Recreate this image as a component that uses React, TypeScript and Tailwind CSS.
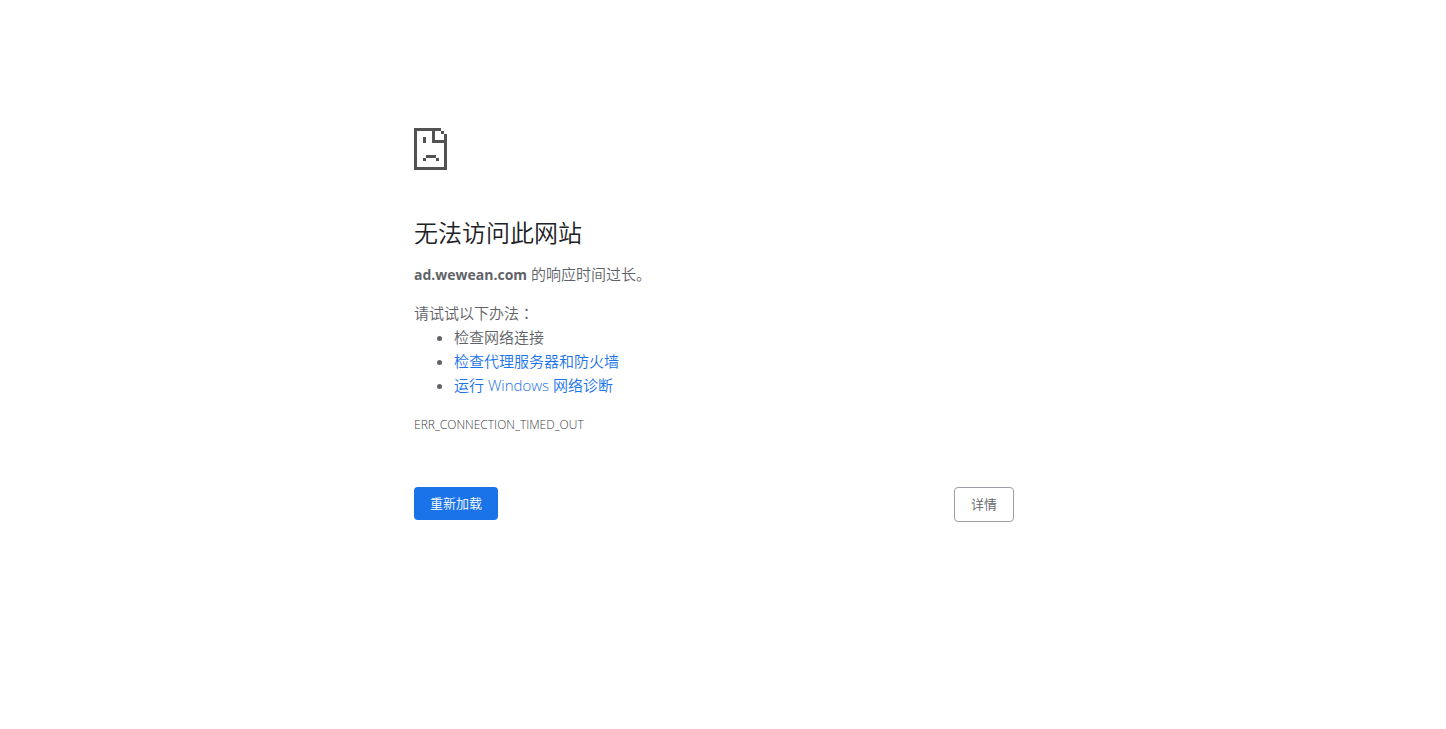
import React from 'react';

const suggestions = [
  { label: '检查网络连接' },
  { label: '检查代理服务器和防火墙', href: '#proxy' },
  { label: '运行 Windows 网络诊断', href: '#diagnose' },
];

const SadPage: React.FC = () => (
  <svg
    className="block h-[42px] w-[33px] text-[#525252]"
    viewBox="0 0 33 42"
    fill="currentColor"
    shapeRendering="crispEdges"
    aria-hidden="true"
  >
    {/* Outline and folded corner */}
    <path d="M0 0h27v3H21v9h9V6h3v36H0zM3 3v36h27V15H18V3z" fillRule="evenodd" />
    <path d="M27 3h3v3h-3z" />
    {/* Face */}
    <path d="M9 9h3v6H9zM12 27h10v3H12zM9 30h3v3H9zM22 30h3v3h-3z" />
  </svg>
);

export default function App() {
  return (
    <div
      lang="zh-CN"
      className="min-h-screen bg-white pr-[18px] font-['Open_Sans','Noto_Sans_CJK_SC',sans-serif] text-[15px] leading-6 font-[350] text-[#5f6368]"
    >
      <main className="mx-auto max-w-[600px] pt-32">
        <SadPage />

        <h1 className="mt-12 text-2xl leading-[30px] font-[350] text-[#202124]">无法访问此网站</h1>
        <p className="mt-3.5">
          <strong className="text-sm leading-none font-bold">ad.wewean.com</strong> 的响应时间过长。
        </p>

        <div className="mt-[15px]">
          <p>
            请试试以下办法<span className="font-['Noto_Sans_CJK_TC',sans-serif] leading-none" lang="zh-TW">：</span>
          </p>
          <ul className="list-disc pl-10">
            {suggestions.map(({ label, href }) => (
              <li key={label}>
                {href ? (
                  <a href={href} className="text-[#1a73e8]">{label}</a>
                ) : (
                  label
                )}
              </li>
            ))}
          </ul>
        </div>

        <p className="mt-4 text-xs leading-6 font-light text-[#3c4043]">ERR_CONNECTION_TIMED_OUT</p>

        <div className="mt-[50px] flex items-start justify-between text-[13px] leading-[17px]">
          <button type="button" className="cursor-pointer rounded bg-[#1a73e8] px-4 py-2 text-white">
            重新加载
          </button>
          <button type="button" className="cursor-pointer rounded border border-[#9aa0a6] bg-white px-4 py-2">
            详情
          </button>
        </div>
      </main>
    </div>
  );
}
